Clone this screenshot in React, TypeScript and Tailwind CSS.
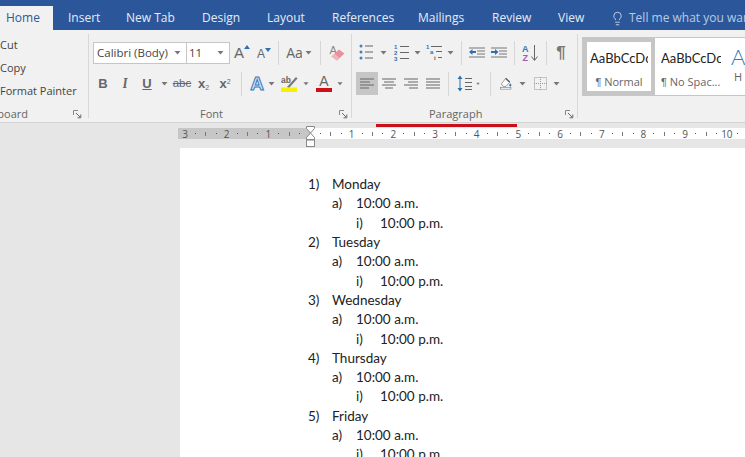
import React from 'react';
import { Lightbulb } from 'lucide-react';

const Caret = ({ className = '' }: { className?: string }) => (
  <svg width="7" height="4" viewBox="0 0 7 4" className={className}>
    <path d="M0.5 0h6L3.5 3.6z" fill="#777" />
  </svg>
);

const Sep = () => <div className="w-px h-[24px] bg-[#d6d6d6]" />;

const Launcher = () => (
  <svg width="9" height="9" viewBox="0 0 9 9">
    <path d="M0.5 5V0.5H5" fill="none" stroke="#888" />
    <path d="M3 3l4 4M7.8 4.5v3.3H4.5" fill="none" stroke="#666" />
  </svg>
);

const Lines = ({ kind }: { kind: 'left' | 'center' | 'right' | 'justify' }) => {
  const rows: Record<string, number[][]> = {
    left: [[0, 14], [0, 10], [0, 14], [0, 9]],
    center: [[0, 14], [2, 12], [0, 14], [3, 11]],
    right: [[0, 14], [4, 14], [0, 14], [5, 14]],
    justify: [[0, 14], [0, 14], [0, 14], [0, 14]],
  };
  return (
    <svg width="14" height="11" viewBox="0 0 14 11">
      {rows[kind].map((r, i) => (
        <rect key={i} x={r[0]} y={i * 3 + 0.5} width={r[1] - r[0]} height="1" fill="#666" />
      ))}
    </svg>
  );
};

const Bullets = () => (
  <svg width="14" height="17" viewBox="0 0 14 17">
    {[2, 8, 14].map((y) => (
      <g key={y}>
        <circle cx="2" cy={y} r="1.5" fill="#4a7fb8" />
        <rect x="6" y={y - 0.5} width="8" height="1" fill="#666" />
      </g>
    ))}
  </svg>
);

const Numbering = () => (
  <svg width="15" height="17" viewBox="0 0 15 17">
    {[0, 1, 2].map((i) => (
      <g key={i}>
        <text x="0" y={i * 6 + 5} fontSize="6" fontWeight="700" fill="#2f6fb0" fontFamily="Liberation Sans, sans-serif">{i + 1}</text>
        <rect x="6" y={i * 6 + 2} width="9" height="1" fill="#666" />
      </g>
    ))}
  </svg>
);

const Multilevel = () => (
  <svg width="17" height="17" viewBox="0 0 17 17">
    <text x="0" y="5" fontSize="6" fontWeight="700" fill="#2f6fb0" fontFamily="Liberation Sans, sans-serif">1</text>
    <rect x="5" y="2" width="11" height="1" fill="#666" />
    <text x="4" y="10" fontSize="6" fontWeight="700" fill="#2f6fb0" fontFamily="Liberation Sans, sans-serif">a</text>
    <rect x="10" y="7" width="6" height="1" fill="#666" />
    <text x="8" y="16" fontSize="6" fontWeight="700" fill="#555" fontFamily="Liberation Sans, sans-serif">i</text>
    <rect x="12" y="13" width="4" height="1" fill="#666" />
  </svg>
);

const Indent = ({ dir }: { dir: 'dec' | 'inc' }) => (
  <svg width="16" height="12" viewBox="0 0 16 12">
    {[0.5, 3.5, 6.5, 9.5].map((y, i) => (
      <rect key={i} x={i === 0 || i === 3 ? 0 : 8} y={y} width={i === 0 || i === 3 ? 16 : 8} height="1" fill="#777" />
    ))}
    {dir === 'dec' ? (
      <path d="M0 5l3.5-3v2h3.5v2H3.5v2z" fill="#2f6fb0" />
    ) : (
      <path d="M7.5 5L4 2v2H0v2h4v2z" fill="#2f6fb0" />
    )}
  </svg>
);

const Sort = () => (
  <svg width="17" height="18" viewBox="0 0 17 18" fontFamily="Liberation Sans, sans-serif" fontSize="9" fontWeight="700">
    <text x="0" y="8" fill="#3a76b5">A</text>
    <text x="0.5" y="17" fill="#a05bb0">Z</text>
    <path d="M12.5 1v15M9.5 12.5l3 4 3-4" fill="none" stroke="#666" />
  </svg>
);

const Eraser = () => (
  <svg width="16" height="17" viewBox="0 0 16 17">
    <text x="0.5" y="10" fontSize="11" fill="#888" fontFamily="Liberation Sans, sans-serif">A</text>
    <path d="M2.5 12.5L10 5.5l5.5 4-7.5 7z" fill="#e7929c" />
    <path d="M2.5 12.5L5.5 9.7l5 4.2L8 16.5z" fill="#f0b6bc" />
  </svg>
);

const LineSpacing = () => (
  <svg width="15" height="17" viewBox="0 0 15 17">
    <path d="M3 0.5L0.5 4h5zM3 16.5L0.5 13h5z" fill="#2f6fb0" />
    <rect x="2.5" y="4" width="1" height="9" fill="#2f6fb0" />
    {[3, 7, 11, 14].map((y) => (
      <rect key={y} x="8" y={y} width="7" height="1" fill="#666" />
    ))}
  </svg>
);

const Shading = () => (
  <svg width="17" height="17" viewBox="0 0 17 17">
    <path d="M2 9l5.5-7 6 5-5 5.5H4.5z" fill="#fff" stroke="#777" />
    <path d="M8 1l6 5.5" stroke="#444" strokeWidth="1.5" />
    <path d="M14.5 8c1 1.4 1.7 2.2 1.7 3a1.6 1.6 0 0 1-3.2 0c0-.8.7-1.6 1.5-3z" fill="#2f6fb0" />
    <rect x="0.5" y="14" width="15" height="2.5" fill="#fff" stroke="#888" />
  </svg>
);

const Borders = () => (
  <svg width="13" height="13" viewBox="0 0 13 13">
    <rect x="0.5" y="0.5" width="12" height="12" fill="none" stroke="#999" strokeDasharray="1 1" />
    <path d="M6.5 0v13M0 6.5h13" stroke="#999" strokeDasharray="1 1" />
  </svg>
);

const TextEffect = () => (
  <span className="w-[15px] text-center text-[19px] leading-none font-bold text-[#cfe2f5] [-webkit-text-stroke:1px_#3a78b8] [font-family:'Liberation_Sans',sans-serif]">A</span>
);

const Highlight = () => (
  <svg width="17" height="17" viewBox="0 0 17 17">
    <text x="0" y="8" fontSize="8.5" fontWeight="700" fill="#666" fontFamily="Liberation Sans, sans-serif">ab</text>
    <path d="M6 12L15 2l1.5 1.5L8 13z" fill="#777" />
    <rect x="0" y="12.5" width="16" height="4.5" fill="#f7f000" />
  </svg>
);

const FontColor = () => (
  <div className="w-[16px] flex flex-col items-center">
    <span className="text-[14px] leading-[13px] text-[#666] [font-family:'Liberation_Sans',sans-serif]">A</span>
    <div className="w-[16px] h-[4px] bg-[#cc1016]" />
  </div>
);

const Tabs = () => (
  <div className="h-[30px] bg-[#2b579a] flex items-end text-[12px] text-[#e4ecf6] shrink-0 overflow-hidden">
    <div className="w-[53px] shrink-0 h-[24px] pl-[6px] flex items-center bg-[#f1f1f1] text-[#2b579a]">Home</div>
    <div className="w-[58px] shrink-0 h-[30px] pt-[6px] pl-[15px] flex items-center">Insert</div>
    <div className="w-[76px] shrink-0 h-[30px] pt-[6px] pl-[15px] flex items-center">New Tab</div>
    <div className="w-[65px] shrink-0 h-[30px] pt-[6px] pl-[15px] flex items-center">Design</div>
    <div className="w-[65px] shrink-0 h-[30px] pt-[6px] pl-[15px] flex items-center">Layout</div>
    <div className="w-[86px] shrink-0 h-[30px] pt-[6px] pl-[15px] flex items-center">References</div>
    <div className="w-[74px] shrink-0 h-[30px] pt-[6px] pl-[15px] flex items-center">Mailings</div>
    <div className="w-[66px] shrink-0 h-[30px] pt-[6px] pl-[15px] flex items-center">Review</div>
    <div className="w-[67px] shrink-0 h-[30px] pt-[6px] pl-[15px] flex items-center">View</div>
    <div className="h-[30px] pt-[6px] shrink-0 flex items-center whitespace-nowrap text-[#b9cbe4]">
      <Lightbulb className="w-[15px] h-[17px] mr-[4px] text-[#e4ecf6]" strokeWidth={1.25} />
      Tell me what you want to do
    </div>
  </div>
);

const Clipboard = () => (
  <div className="w-[89px] shrink-0 border-r border-[#d8d8d8] my-[4px] flex flex-col">
    <div className="h-[76px] shrink-0 flex flex-col text-[11px] text-[#444]">
      <div className="h-[23px] flex items-center">Cut</div>
      <div className="h-[23px] flex items-center">Copy</div>
      <div className="h-[23px] flex items-center whitespace-nowrap">Format Painter</div>
    </div>
    <div className="flex items-center justify-between pr-[6px] h-[8px] text-[11px] text-[#666]">
      <div className="w-[28px] flex justify-end overflow-hidden"><span>Clipboard</span></div>
      <Launcher />
    </div>
  </div>
);

const Cell = ({ w, children }: { w: string; children?: React.ReactNode }) => (
  <div className={`${w} h-[23px] flex items-center justify-center shrink-0`}>{children}</div>
);

const FontGroup = () => (
  <div className="w-[263px] shrink-0 border-r border-[#d8d8d8] my-[4px] flex flex-col">
    <div className="h-[76px] shrink-0 pl-[4px] pt-[7px] flex flex-col">
      <div className="h-[23px] shrink-0 flex items-center">
        <div className="w-[94px] h-[22px] bg-white border border-[#c6c6c6] flex items-center justify-between pl-[3px] pr-[5px] text-[11.5px] text-[#444] shrink-0">
          Calibri (Body)
          <Caret />
        </div>
        <div className="w-[43px] h-[22px] bg-white border border-[#c6c6c6] border-l-0 flex items-center justify-between pl-[2px] pr-[5px] text-[11.5px] text-[#444] shrink-0">
          11
          <Caret />
        </div>
        <div className="w-[22px] ml-[1px] flex justify-center items-start text-[#666] text-[15px] leading-none [font-family:'Liberation_Sans',sans-serif]">
          A<svg width="6" height="4" viewBox="0 0 6 4"><path d="M0 4l3-4 3 4z" fill="#2f6fb0" /></svg>
        </div>
        <div className="w-[22px] flex justify-center items-start text-[#666] text-[12px] leading-none pt-[3px] [font-family:'Liberation_Sans',sans-serif]">
          A<svg width="6" height="4" viewBox="0 0 6 4"><path d="M0 0h6L3 4z" fill="#2f6fb0" /></svg>
        </div>
        <div className="w-[6px] flex justify-center"><Sep /></div>
        <div className="w-[36px] flex items-center justify-center gap-[2px] text-[14px] text-[#666]">Aa<Caret /></div>
        <div className="w-[6px] flex justify-center"><Sep /></div>
        <div className="w-[28px] flex justify-center"><Eraser /></div>
      </div>
      <div className="h-[23px] shrink-0 mt-[8px] flex items-center text-[#666] [font-family:'Liberation_Sans',sans-serif]">
        <Cell w="w-[22px] ml-[-1px]"><b className="text-[13px]">B</b></Cell>
        <Cell w="w-[22px]"><i className="text-[13px] font-serif font-bold">I</i></Cell>
        <Cell w="w-[22px]"><b className="text-[13px] underline">U</b></Cell>
        <Cell w="w-[12px]"><Caret /></Cell>
        <Cell w="w-[22px] ml-[1px]"><span className="text-[11.5px] line-through">abc</span></Cell>
        <Cell w="w-[21px]"><b className="text-[13px]">x<sub className="text-[7px] font-normal">2</sub></b></Cell>
        <Cell w="w-[22px]"><b className="text-[13px]">x<sup className="text-[7px] font-normal">2</sup></b></Cell>
        <Cell w="w-[10px]"><Sep /></Cell>
        <Cell w="w-[20px] ml-[1px]"><TextEffect /></Cell>
        <Cell w="w-[8px]"><Caret /></Cell>
        <Cell w="w-[28px]"><Highlight /></Cell>
        <Cell w="w-[6px]"><Caret /></Cell>
        <Cell w="w-[26px] ml-[2px]"><FontColor /></Cell>
        <Cell w="w-[6px]"><Caret /></Cell>
      </div>
    </div>
    <div className="flex items-center justify-between pr-[3px] h-[8px] text-[11px] text-[#666]">
      <span className="pl-[111px]">Font</span>
      <Launcher />
    </div>
  </div>
);

const Paragraph = () => (
  <div className="w-[226px] shrink-0 border-r border-[#d8d8d8] my-[4px] flex flex-col">
    <div className="h-[76px] shrink-0 pl-[4px] pt-[7px] flex flex-col">
      <div className="h-[23px] shrink-0 flex items-center">
        <Cell w="w-[20px]"><Bullets /></Cell>
        <Cell w="w-[14px]"><Caret /></Cell>
        <Cell w="w-[20px] ml-[1px]"><Numbering /></Cell>
        <Cell w="w-[12px]"><Caret /></Cell>
        <Cell w="w-[22px]"><Multilevel /></Cell>
        <Cell w="w-[10px]"><Caret /></Cell>
        <Cell w="w-[12px]"><Sep /></Cell>
        <Cell w="w-[20px]"><Indent dir="dec" /></Cell>
        <Cell w="w-[23px]"><Indent dir="inc" /></Cell>
        <Cell w="w-[8px]"><Sep /></Cell>
        <Cell w="w-[24px]"><Sort /></Cell>
        <Cell w="w-[8px]"><Sep /></Cell>
        <Cell w="w-[22px]"><span className="text-[17px] font-bold text-[#777] [font-family:'Liberation_Sans',sans-serif]">¶</span></Cell>
      </div>
      <div className="h-[23px] shrink-0 mt-[8px] flex items-center">
        <div className="w-[22px] h-[23px] bg-[#c6c6c6] flex items-center justify-center"><Lines kind="left" /></div>
        <Cell w="w-[22px]"><Lines kind="center" /></Cell>
        <Cell w="w-[22px]"><Lines kind="right" /></Cell>
        <Cell w="w-[22px]"><Lines kind="justify" /></Cell>
        <Cell w="w-[8px]"><Sep /></Cell>
        <Cell w="w-[24px]"><LineSpacing /></Cell>
        <Cell w="w-[4px]"><Caret /></Cell>
        <Cell w="w-[20px]"><Sep /></Cell>
        <Cell w="w-[12px]"><Shading /></Cell>
        <Cell w="w-[20px]"><Caret /></Cell>
        <Cell w="w-[16px]"><Borders /></Cell>
        <Cell w="w-[16px]"><Caret /></Cell>
      </div>
    </div>
    <div className="flex items-center justify-between pr-[3px] h-[8px] text-[11px] text-[#666]">
      <span className="pl-[77px]">Paragraph</span>
      <Launcher />
    </div>
  </div>
);

const Pilcrow = () => <span className="[font-family:'Liberation_Sans',sans-serif]">¶</span>;

const Styles = () => (
  <div className="ml-[4px] mt-[7px] h-[59px] flex-1 bg-white border border-[#c6c6c6] border-r-0 flex overflow-hidden [font-family:Lato,sans-serif]">
    <div className="w-[72px] h-[57px] border-[4px] border-[#c6c6c6] flex flex-col items-center shrink-0 overflow-hidden">
      <div className="w-[58px] overflow-hidden whitespace-nowrap text-[13px] text-[#222] mt-[7px]">AaBbCcDc</div>
      <div className="text-[11px] text-[#666] mt-[5px] [font-family:'Open_Sans',sans-serif]"><Pilcrow /> Normal</div>
    </div>
    <div className="w-[70px] pl-[6px] flex flex-col shrink-0 overflow-hidden">
      <div className="w-[60px] overflow-hidden whitespace-nowrap text-[13px] text-[#222] mt-[11px]">AaBbCcDc</div>
      <div className="whitespace-nowrap text-[11px] text-[#666] mt-[5px] [font-family:'Open_Sans',sans-serif]"><Pilcrow /> No Spac...</div>
    </div>
    <div className="pl-[6px] flex flex-col shrink-0">
      <div className="text-[22px] leading-[24px] font-light text-[#3a78b8] mt-[7px]">A</div>
      <div className="text-[11px] pl-[3px] text-[#666] [font-family:'Open_Sans',sans-serif]">H</div>
    </div>
  </div>
);

const tick = (item: string, i: number) => (
  <div key={i} className="w-[10.43px] h-[11px] shrink-0 flex items-center justify-center text-[10px] leading-none text-[#555]">
    {item === '.' && <div className="w-px h-px bg-[#555]" />}
    {item === '|' && <div className="w-px h-[4px] bg-[#777]" />}
    {item !== '.' && item !== '|' && item}
  </div>
);

const grayTicks = ['3', '.', '|', '.', '2', '.', '|', '.', '1', '.', '|', '.'];
const whiteTicks = ['.', '|', '.', '1', '.', '|', '.', '2', '.', '|', '.', '3', '.', '|', '.', '4', '.', '|', '.', '5', '.', '|', '.', '6', '.', '|', '.', '7', '.', '|', '.', '8', '.', '|', '.', '9', '.', '|', '.', '10', '.', '|', '.'];

const Ruler = () => (
  <div className="h-[26px] shrink-0 bg-[#e6e6e6] border-t border-[#d4d4d4] pt-[5px] pl-[178px] relative">
    <div className="absolute left-[376px] top-[1px] w-[141px] h-[3px] bg-[#c8101a]" />
    <div className="flex h-[11px] overflow-hidden">
      <div className="w-[132px] pl-[1.8px] bg-[#c6c6c6] flex shrink-0">{grayTicks.map(tick)}</div>
      <div className="flex-1 pl-[5.2px] bg-white flex">{whiteTicks.map(tick)}</div>
    </div>
    <svg className="absolute left-[306px] top-[3px]" width="9" height="21" viewBox="0 0 9 21">
      <path d="M0.5 0.5h8v2L4.5 7l4 4.5v2h-8v-2L4.5 7l-4-4.5z" fill="#fff" stroke="#888" />
      <rect x="0.5" y="14" width="8" height="6.5" fill="#fff" stroke="#888" />
    </svg>
  </div>
);

const days = ['Monday', 'Tuesday', 'Wednesday', 'Thursday', 'Friday'];

const DocRow = ({ label, text, indent }: { label: string; text: string; indent: string }) => (
  <div className={`${indent} h-[19.3px] flex items-center whitespace-nowrap`}>
    <span className="w-[24px] shrink-0">{label}</span>
    <span>{text}</span>
  </div>
);

export default function App() {
  return (
    <div className="w-[745px] h-[457px] overflow-hidden flex flex-col bg-[#e6e6e6] [font-family:'Open_Sans',sans-serif]">
      <Tabs />
      <div className="h-[92px] shrink-0 bg-[#f1f1f1] flex">
        <Clipboard />
        <FontGroup />
        <Paragraph />
        <Styles />
      </div>
      <Ruler />
      <div className="flex-1 min-h-0 overflow-hidden ml-[180px] bg-white pt-[26.6px] pl-[128px] text-[13.5px] text-[#222] [font-family:Lato,sans-serif]">
        {days.map((day, i) => (
          <div key={day}>
            <DocRow label={`${i + 1})`} text={day} indent="" />
            <DocRow label="a)" text="10:00 a.m." indent="ml-[24px]" />
            <DocRow label="i)" text="10:00 p.m." indent="ml-[48px]" />
          </div>
        ))}
      </div>
    </div>
  );
}
